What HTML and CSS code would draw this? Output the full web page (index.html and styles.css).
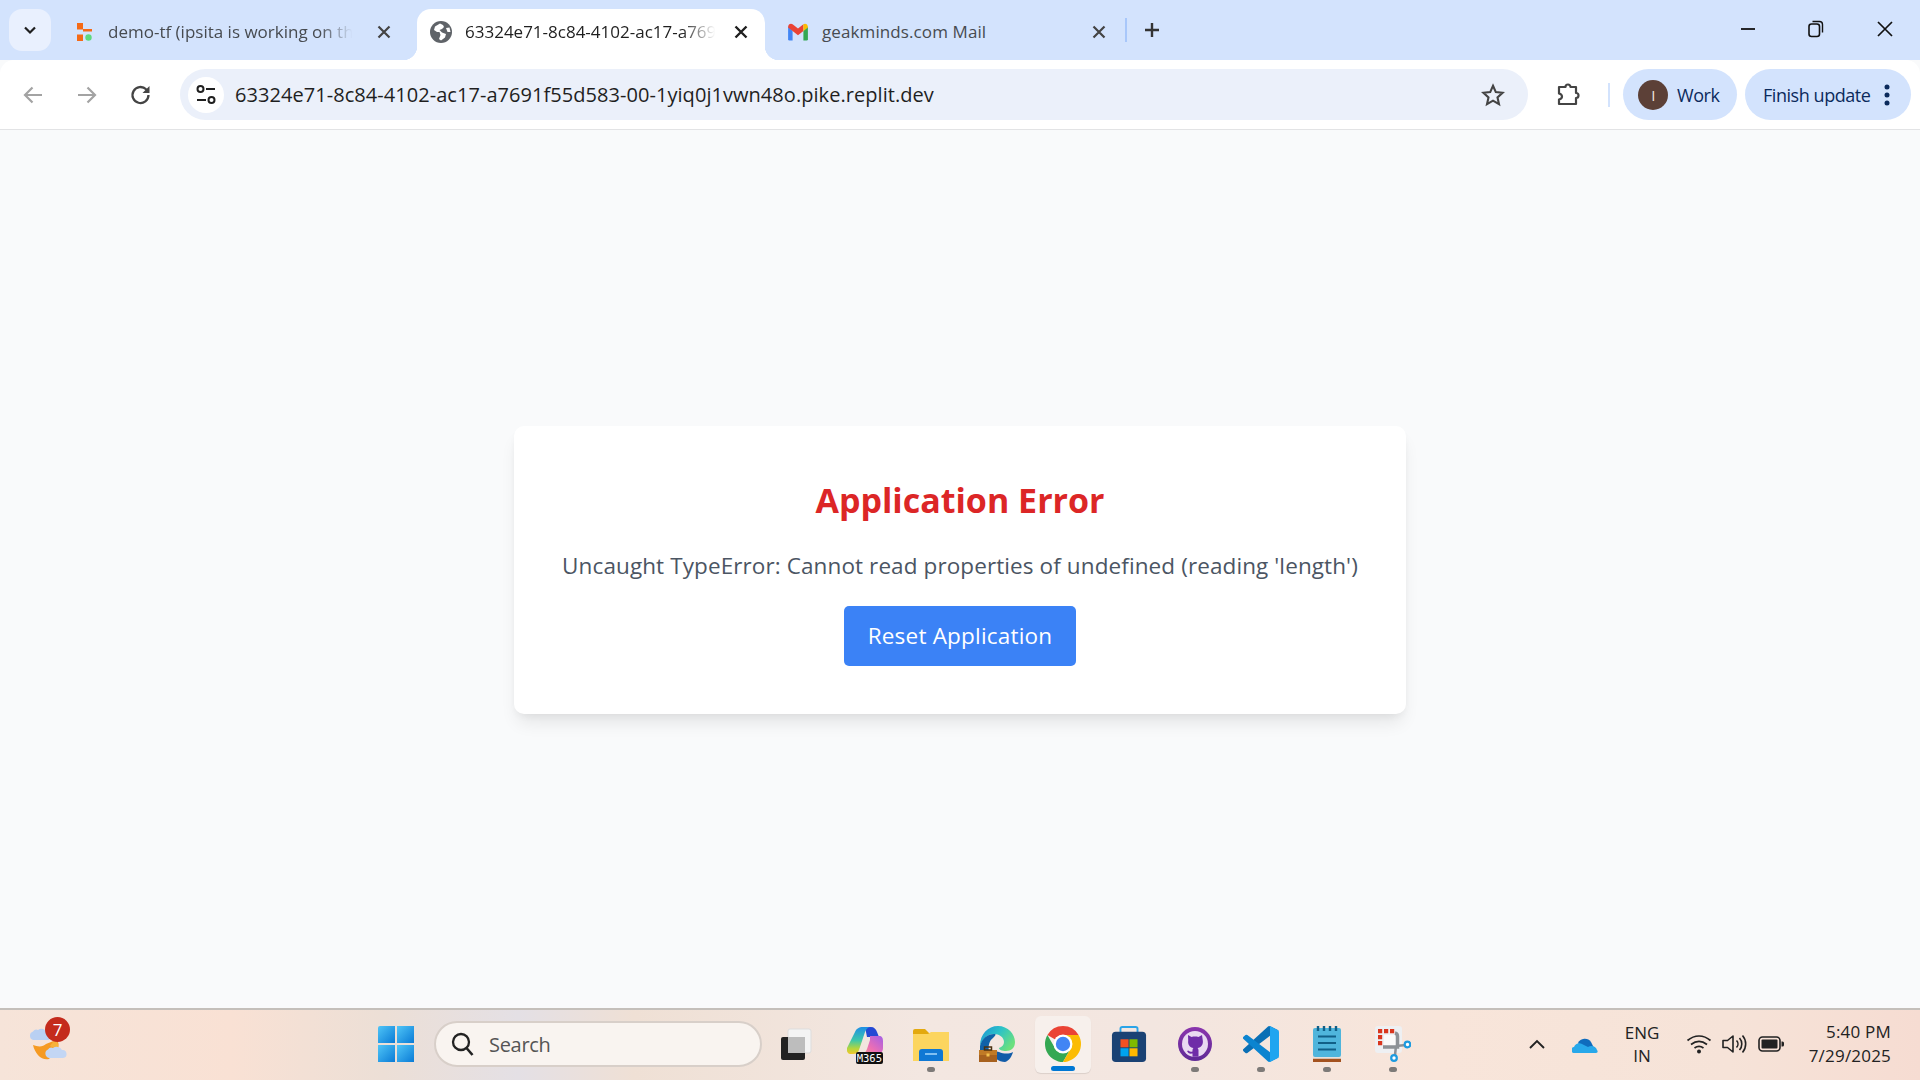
FILE: index.html
```html
<!DOCTYPE html>
<html lang="en">
<head>
<meta charset="utf-8">
<title>Application Error</title>
<link rel="stylesheet" href="styles.css">
</head>
<body>
<div class="window">
  <header class="tabstrip">
    <button class="tabsearch"><svg width="18" height="18" viewBox="0 0 18 18"><path d="M4 6.500l5 5 5-5" fill="none" stroke="#1f1f1f" stroke-width="2.200"/></svg></button>
    <div class="tab tab-one">
      <svg class="favicon" width="16" height="18" viewBox="0 0 16 18"><rect x="0" y="0" width="6" height="6.500" fill="#f56a16"/><rect x="6" y="6" width="9" height="2.500" fill="#f56a16"/><rect x="0" y="11.500" width="6" height="6.500" fill="#f56a16"/><circle cx="11.500" cy="14.500" r="3.200" fill="#5fd97f"/></svg>
      <span class="tabtitle">demo-tf (ipsita is working on th</span>
      <svg class="tabclose" width="20" height="20" viewBox="0 0 20 20"><path d="M4.500 4.500l11 11M15.500 4.500l-11 11" stroke="#444" stroke-width="2.200"/></svg>
    </div>
    <div class="tab tab-active">
      <svg class="favicon" width="22" height="22" viewBox="0 0 22 22"><circle cx="11" cy="11" r="11" fill="#5f6368"/><path d="M10 2.500 5 5.500 4 9l3 2 2.500 0 1 3-1.500 4 2 1.500 4-3 1-3.500-4-1.500-2.500-2.500 2.500-1 2-2-1-2z" fill="#fff"/><path d="M16 7l3.500-.5 1 4.500-3 0z" fill="#fff"/></svg>
      <span class="tabtitle">63324e71-8c84-4102-ac17-a769</span>
      <svg class="tabclose" width="20" height="20" viewBox="0 0 20 20"><path d="M4.500 4.500l11 11M15.500 4.500l-11 11" stroke="#1f1f1f" stroke-width="2.400"/></svg>
    </div>
    <div class="tab tab-three">
      <svg class="favicon" width="22" height="18" viewBox="0 0 24 20"><path d="M1 4v14a1.500 1.500 0 0 0 1.500 1.500H6V9z" fill="#4285f4"/><path d="M23 4v14a1.500 1.500 0 0 1-1.500 1.500H18V9z" fill="#34a853"/><path d="M1 4.500C1 1.500 4 0 6 1.500L12 6l6-4.500V9l-6 4.500L6 9 1 5z" fill="#ea4335"/><path d="M18 1.500C20 0 23 1.500 23 4.500V5l-5 4z" fill="#fbbc04"/></svg>
      <span class="tabtitle tabtitle-plain">geakminds.com Mail</span>
      <svg class="tabclose" width="20" height="20" viewBox="0 0 20 20"><path d="M4.500 4.500l11 11M15.500 4.500l-11 11" stroke="#444" stroke-width="2.200"/></svg>
    </div>
    <span class="tabsep"></span>
    <svg class="newtab" width="20" height="20" viewBox="0 0 20 20"><path d="M10 3v14M3 10h14" stroke="#333" stroke-width="2.400"/></svg>
    <div class="winctl">
      <svg width="16" height="16" viewBox="0 0 16 16"><path d="M1 8h14" stroke="#111" stroke-width="1.800"/></svg>
      <svg width="16" height="18" viewBox="0 0 16 18"><rect x="1" y="4" width="10.500" height="12.500" rx="2.500" fill="none" stroke="#111" stroke-width="1.600"/><path d="M4.500 1.500h7a3 3 0 0 1 3 3v8" fill="none" stroke="#111" stroke-width="1.400"/></svg>
      <svg width="18" height="18" viewBox="0 0 18 18"><path d="M2 2l14 14M16 2L2 16" stroke="#111" stroke-width="1.700"/></svg>
    </div>
  </header>

  <nav class="toolbar">
    <svg class="navbtn" width="24" height="24" viewBox="0 0 24 24"><path d="M21 12H4M11.500 4.500 4 12l7.500 7.500" fill="none" stroke="#a3a3a3" stroke-width="2.200"/></svg>
    <svg class="navbtn" width="24" height="24" viewBox="0 0 24 24"><path d="M3 12h17M12.500 4.500 20 12l-7.500 7.500" fill="none" stroke="#a3a3a3" stroke-width="2.200"/></svg>
    <svg class="navbtn" width="24" height="24" viewBox="0 0 24 24"><path d="M19.500 12a8 8 0 1 1-2.400-5.700L19.500 8.500" fill="none" stroke="#444" stroke-width="2.300"/><path d="M20.500 3v7h-7z" fill="#444"/></svg>
    <div class="omnibox">
      <span class="siteinfo"><svg width="22" height="22" viewBox="0 0 22 22"><circle cx="5.500" cy="5" r="3" fill="none" stroke="#1f1f1f" stroke-width="2"/><path d="M11 5h9M2 16h9" stroke="#1f1f1f" stroke-width="2.200"/><circle cx="16.500" cy="16" r="3" fill="none" stroke="#1f1f1f" stroke-width="2"/></svg></span>
      <span class="url">63324e71-8c84-4102-ac17-a7691f55d583-00-1yiq0j1vwn48o.pike.replit.dev</span>
      <svg class="star" width="24" height="24" viewBox="0 0 24 24"><path d="M12 2.800l2.800 6.300 6.800.7-5.100 4.600 1.500 6.800L12 17.700l-6 3.500 1.500-6.800L2.400 9.800l6.800-.7z" fill="none" stroke="#444" stroke-width="2.100"/></svg>
    </div>
    <svg class="puzzle" width="26" height="26" viewBox="0 1 26 26"><path d="M4 6h6.500a2.500 2.500 0 0 1 5 0H21v6a2.500 2.500 0 0 1 0 5v6H4v-4.500c2-.5 3-1.500 3-3s-1-2.500-3-3z" fill="none" stroke="#444" stroke-width="2.200" stroke-linejoin="round"/></svg>
    <span class="toolsep"></span>
    <div class="pill pill-work"><span class="avatar">I</span><span>Work</span></div>
    <div class="pill pill-update"><span>Finish update</span><svg width="6" height="24" viewBox="0 0 6 24"><circle cx="3" cy="4" r="2.500" fill="#0b2a5c"/><circle cx="3" cy="12" r="2.500" fill="#0b2a5c"/><circle cx="3" cy="20" r="2.500" fill="#0b2a5c"/></svg></div>
  </nav>

  <main class="page">
    <section class="card">
      <h1 class="card-title">Application Error</h1>
      <p class="card-text">Uncaught TypeError: Cannot read properties of undefined (reading 'length')</p>
      <button class="reset">Reset Application</button>
    </section>
  </main>

  <footer class="taskbar">
    <div class="weather">
      <svg width="40" height="44" viewBox="0 0 40 44"><path d="M4 23c5 2 10 2 13-1l10-4c3 2 3 5 2 8L20 37c-7 2-14-5-16-14z" fill="#f59a23"/><path d="M26 17c3 3 4 7 3 11l-8-4z" fill="#f7b23b"/><path d="M4 18a4.500 4.500 0 0 1 0-8.500 4 4 0 0 1 5-1.500 6 6 0 0 1 9 2.500 3.800 3.800 0 0 1 1 7.500z" fill="#b9d0f2"/><path d="M20 36a4.500 4.500 0 0 1-1-8.500 4 4 0 0 1 5-1.500 6 6 0 0 1 9 2 4 4 0 0 1 1 8z" fill="#c3d6f4"/></svg>
      <span class="badge">7</span>
    </div>
    <div class="winlogo"><span></span><span></span><span></span><span></span></div>
    <div class="search">
      <svg width="26" height="26" viewBox="0 0 26 26"><circle cx="11" cy="11" r="8" fill="none" stroke="#222" stroke-width="2.300"/><path d="M16.500 17l6 7" stroke="#222" stroke-width="2.600"/></svg>
      <span>Search</span>
    </div>
    <div class="slot slot-task">
      <svg width="32" height="32" viewBox="0 0 32 32"><rect x="8" y="1" width="23" height="24" rx="2" fill="#f4f4f4" stroke="#ddd"/><rect x="1" y="9" width="24" height="23" rx="2" fill="#222"/><rect x="8" y="9" width="17" height="16" fill="#bdbdbd"/></svg>
    </div>
    <div class="slot slot-m365">
      <svg width="36" height="36" viewBox="0 0 36 36"><defs><linearGradient id="cl" x1="0" y1="0" x2="0" y2="1"><stop offset="0" stop-color="#1f8fe6"/><stop offset=".5" stop-color="#3fc8a8"/><stop offset=".8" stop-color="#b6d53c"/><stop offset="1" stop-color="#f2c72c"/></linearGradient><linearGradient id="cr" x1="1" y1="0" x2="0" y2="1"><stop offset="0" stop-color="#a45fe6"/><stop offset=".6" stop-color="#ec6fb4"/><stop offset="1" stop-color="#f59a8a"/></linearGradient></defs><path d="M18 1h6c3 0 5 2 6 5l2 5H20z" fill="#2448d4"/><path d="M8 6c1-3 4-5 8-5h8c-3 0-5 2-6 5l-6 18c-1 3-3 4-6 4H3c-2 0-4-3-3-6z" fill="url(#cl)"/><path d="M23 10h9c3 0 4 2 4 5v7c0 4-3 6-6 6H14c3 0 5-2 6-5l3-9z" fill="url(#cr)"/></svg>
      <span class="m365">M365</span>
    </div>
    <div class="slot slot-dot">
      <svg width="36" height="33" viewBox="0 0 36 33"><path d="M0 3a2 2 0 0 1 2-2h10l4 4h18a2 2 0 0 1 2 2v3H0z" fill="#e3a90f"/><path d="M0 6h15l3-2h18v29H0z" fill="#fcd55f"/><path d="M6 33v-9a3 3 0 0 1 3-3h18a3 3 0 0 1 3 3v9z" fill="#0f78d4"/><path d="M12 26h12" stroke="#7fc0f2" stroke-width="2"/></svg>
    </div>
    <div class="slot">
      <svg width="36" height="36" viewBox="0 0 36 36"><defs><linearGradient id="eg" x1="0" y1="0" x2="1" y2=".6"><stop offset="0" stop-color="#1a8fd6"/><stop offset=".5" stop-color="#2cc2c8"/><stop offset="1" stop-color="#6be07e"/></linearGradient></defs><path d="M1 20C1 8 9 0 19 0c10 0 17 8 17 16 0 6-4 9-9 9-4 0-7-1-7-3 3-1 5-3 5-6 0-5-5-8-10-8C9 8 4 12 1 20z" fill="url(#eg)"/><path d="M1 20C3 12 9 8 15 8c3 0 1 2-1 4-4 3-5 8-4 14H1z" fill="#0f62a8"/><path d="M11 24c3 8 9 12 15 12 4-1 7-6 8-10-4 2-9 2-14 0z" fill="#125ca8"/><path d="M0 24h18v12H0z" fill="#a7611e"/><path d="M0 24h18v5H0z" fill="#c07a26"/><rect x="5.500" y="21" width="7" height="3" fill="none" stroke="#4a3010" stroke-width="1.500"/><rect x="7.500" y="27.500" width="3" height="3" fill="#f2c14e"/></svg>
    </div>
    <div class="slot slot-active">
      <svg width="36" height="36" viewBox="4 4 40 40"><path d="M24 4a20 20 0 0 1 17.320 10H24a10 10 0 0 0-8.660 5L6.680 14A20 20 0 0 1 24 4z" fill="#ea4335"/><path d="M6.680 14A20 20 0 0 0 24 44l8.660-15a10 10 0 0 1-17.320 0z" fill="#34a853"/><path d="M41.320 14A20 20 0 0 1 24 44l8.660-15a10 10 0 0 0 0-10L24 14z" fill="#fbbc04"/><circle cx="24" cy="24" r="10.500" fill="#fff"/><circle cx="24" cy="24" r="8" fill="#4285f4"/></svg>
    </div>
    <div class="slot">
      <svg width="36" height="36" viewBox="0 0 36 38"><path d="M9 8V3a2 2 0 0 1 2-2h14a2 2 0 0 1 2 2v5" fill="none" stroke="#2aa4e8" stroke-width="2"/><rect y="6" width="36" height="32" rx="4" fill="#1a4274"/><rect x="9" y="14" width="8.500" height="8.500" fill="#f25022"/><rect x="18.500" y="14" width="8.500" height="8.500" fill="#7fba00"/><rect x="9" y="23.500" width="8.500" height="8.500" fill="#00a4ef"/><rect x="18.500" y="23.500" width="8.500" height="8.500" fill="#ffb900"/></svg>
    </div>
    <div class="slot slot-dot">
      <svg width="34" height="34" viewBox="0 0 34 34"><defs><linearGradient id="gh" x1="0" y1="0" x2="0" y2="1"><stop offset="0" stop-color="#8a35ad"/><stop offset="1" stop-color="#5f2a96"/></linearGradient></defs><circle cx="17" cy="17" r="17" fill="url(#gh)"/><circle cx="17" cy="17" r="13" fill="#e9daf1"/><path d="M10 8l3.500 2c2.300-.6 4.700-.6 7 0L24 8l.8 5.500c.6 4-1.500 7-5.300 7.500.8.800 1 1.500 1 2.500v6.300h-6v-3.300c-3 .6-4.500-.5-5.500-2.500l1.500-.5c.7 1 1.500 1.500 4 1v-1c0-1 .2-1.700 1-2.500-3.800-.5-5.900-3.500-5.300-7.500z" fill="#6f2da8"/></svg>
    </div>
    <div class="slot slot-dot">
      <svg width="36" height="36" viewBox="0 0 100 100"><path d="M96.460 10.800 75.860.9a6.230 6.230 0 0 0-7.110 1.210L1.300 63.640a4.170 4.170 0 0 0 .01 6.160l5.510 5a4.170 4.170 0 0 0 5.320.24L93.360 13.370c2.700-2.050 6.640-.13 6.640 3.270v-.24a6.250 6.250 0 0 0-3.540-5.600z" fill="#0a6fb5"/><path d="M96.460 89.200 75.860 99.100a6.230 6.230 0 0 1-7.110-1.210L1.300 36.360a4.170 4.170 0 0 1 .01-6.160l5.510-5a4.170 4.170 0 0 1 5.320-.24l81.220 61.670c2.700 2.050 6.640.13 6.640-3.270v.24a6.250 6.250 0 0 1-3.540 5.600z" fill="#0b84d0"/><path d="M75.860 99.130a6.240 6.240 0 0 1-7.110-1.210c2.300 2.300 6.250.67 6.250-2.590V4.670c0-3.260-3.950-4.890-6.250-2.590a6.240 6.240 0 0 1 7.110-1.210l20.600 9.910A6.250 6.250 0 0 1 100 16.400v67.200a6.250 6.250 0 0 1-3.540 5.630z" fill="#1fa5f0"/></svg>
    </div>
    <div class="slot slot-dot">
      <svg width="28" height="36" viewBox="0 0 28 36"><rect y="32.500" width="28" height="3.500" fill="#a4521f"/><rect y="30" width="28" height="2.500" fill="#e5e1dc"/><rect y="2" width="28" height="29" rx="2" fill="#4fb5dc"/><path d="M5 10.500h18M5 17h18M5 23.500h18" stroke="#115f87" stroke-width="2"/><path d="M5 0v5M11 0v5M17 0v5M23 0v5" stroke="#115f87" stroke-width="2.400"/></svg>
    </div>
    <div class="slot slot-dot">
      <svg width="36" height="36" viewBox="0 0 36 36"><rect width="27" height="27" rx="3" fill="#eef0f3"/><rect x="9" y="9" width="12" height="11" fill="#fafafa"/><path d="M3 3h4.200v4.200H3zM9 3h4.200v4.200H9zM15 3h4.200v4.200H15zM3 9h4.200v4.200H3zM3 15h4.200v4.200H3z" fill="#d9361e"/><path d="M20 7c2 .5 2.500 2 2.500 3.500V21H8" fill="none" stroke="#8c9196" stroke-width="3.500"/><path d="M21 20l10-1M21 20l-1 9" stroke="#8c9196" stroke-width="2.500"/><circle cx="32.500" cy="18.500" r="2.800" fill="#fff" stroke="#1d9be0" stroke-width="2.200"/><circle cx="19" cy="32" r="2.800" fill="#fff" stroke="#1d9be0" stroke-width="2.200"/></svg>
    </div>
    <div class="tray">
      <div class="trayslot"><svg width="18" height="12" viewBox="0 0 18 12"><path d="M2 10l7-7 7 7" fill="none" stroke="#222" stroke-width="1.900"/></svg></div>
      <div class="trayslot trayslot-cloud"><svg width="26" height="18" viewBox="0 0 26 18"><path d="M6 8a7.500 7.500 0 0 1 13-1l4 8-14-2z" fill="#0f6cbd"/><path d="M3 18a3 3 0 0 1-1-6c1-3 5-5 8-3l6 3c3-2 8-1 9 3 1 1 1 3-1 3z" fill="#28a8ea"/></svg></div>
      <div class="lang"><span>ENG</span><span>IN</span></div>
      <div class="trayslot"><svg width="26" height="20" viewBox="0 0 26 20"><path d="M1.500 6.500c7-6 16-6 23 0M5 10.500c5-4 11-4 16 0M8.500 14c3-2.200 6-2.200 9 0" fill="none" stroke="#222" stroke-width="1.700"/><circle cx="13" cy="17.500" r="2" fill="#222"/></svg></div>
      <div class="trayslot"><svg width="26" height="22" viewBox="0 0 26 22"><path d="M1 7.500h4.500L11 3v16l-5.500-4.500H1z" fill="none" stroke="#222" stroke-width="1.600" stroke-linejoin="round"/><path d="M14.500 7.500a5 5 0 0 1 0 7M17.500 5a9 9 0 0 1 0 12M20.500 2.500a13 13 0 0 1 0 17" fill="none" stroke="#222" stroke-width="1.600"/></svg></div>
      <div class="trayslot"><svg width="26" height="16" viewBox="0 0 26 16"><rect x="1" y="1" width="21" height="14" rx="3.500" fill="none" stroke="#222" stroke-width="1.600"/><rect x="3.500" y="3.500" width="16" height="9" rx="1" fill="#222"/><path d="M23.500 5.500h1a1.500 1.500 0 0 1 1.500 1.500v2a1.500 1.500 0 0 1-1.500 1.500h-1z" fill="#222"/></svg></div>
      <div class="clock"><span>5:40 PM</span><span>7/29/2025</span></div>
    </div>
  </footer>
</div>
</body>
</html>
```
FILE: styles.css
```css
* { box-sizing: border-box; }
html, body { margin: 0; height: 100%; }
body { font-family: "Open Sans", "Noto Sans", sans-serif; overflow: hidden; }
.window { display: flex; flex-direction: column; width: 1920px; height: 1080px; background: #f9fafb; }

.tabstrip { display: flex; align-items: flex-start; flex: 0 0 60px; background: #d3e3fd; }
.tabsearch { display: flex; align-items: center; justify-content: center; width: 42px; height: 42px; margin: 9px 6px 0 9px; padding: 0; border: 0; border-radius: 13px; background: #e9f0fe; }
.tab { position: relative; display: flex; align-items: center; height: 51px; margin-top: 9px; padding-bottom: 6px; font-size: 17px; color: #474b50; }
.tab-one { width: 360px; padding-left: 20px; }
.tab-active { width: 348px; padding-left: 13px; background: #fff; border-radius: 14px 14px 0 0; color: #1f1f1f; }
.tab-three { width: 361px; padding-left: 22px; }
.tab-active::before, .tab-active::after { content: ""; position: absolute; bottom: 0; width: 14px; height: 14px; }
.tab-active::before { left: -14px; background: radial-gradient(circle at 0 0, #d3e3fd 14px, #fff 14.5px); }
.tab-active::after { right: -14px; background: radial-gradient(circle at 100% 0, #d3e3fd 14px, #fff 14.5px); }
.favicon { flex: none; margin-right: 14px; }
.tab-one .favicon { margin-right: 15px; }
.tab-active .favicon { margin-right: 13px; }
.tab-three .favicon { margin-right: 13px; }
.tabtitle { flex: 1; min-width: 0; white-space: nowrap; -webkit-mask-image: linear-gradient(90deg, #000 84%, transparent 97%); mask-image: linear-gradient(90deg, #000 84%, transparent 97%); }
.tabtitle-plain { letter-spacing: 0.1px; -webkit-mask-image: none; mask-image: none; }
.tabclose { flex: none; margin: 0 23px 0 14px; }
.tab-active .tabclose { margin-right: 14px; margin-left: 8px; }
.tab-three .tabclose { margin-right: 17px; }
.tabsep { flex: none; width: 2px; height: 24px; margin: 18px 0 0 -1px; background: #a8c7fa; }
.newtab { flex: none; margin: 20px 0 0 15px; }
.winctl { display: flex; align-items: center; margin: 20px 0 0 auto; padding-right: 26px; gap: 52px; }

.toolbar { display: flex; align-items: center; flex: 0 0 70px; padding: 0 10px 0 21px; background: #fff; border-bottom: 1px solid #e2e3e5; border-radius: 14px 14px 0 0; position: relative; }
.navbtn { flex: none; margin-right: 30px; }
.omnibox { display: flex; align-items: center; flex: none; width: 1348px; height: 51px; margin-left: -3px; padding: 0 23px 0 8px; background: #ebf0fa; border-radius: 26px; }
.siteinfo { display: flex; align-items: center; justify-content: center; flex: none; width: 36px; height: 36px; border-radius: 50%; background: #fff; }
.url { flex: 1; margin-left: 11px; font-size: 20px; letter-spacing: 0.05px; color: #1f1f1f; white-space: nowrap; }
.star { flex: none; }
.puzzle { flex: none; margin-left: 27px; }
.toolsep { flex: none; width: 2px; height: 24px; margin: 0 13px 0 27px; background: #d3e3fd; }
.pill { display: flex; align-items: center; flex: none; height: 51px; border-radius: 26px; background: #d3e3fd; color: #0b2a5c; font-size: 18px; letter-spacing: -0.45px; }
.pill-work { width: 114px; padding-left: 15px; gap: 9px; }
.avatar { display: flex; align-items: center; justify-content: center; width: 30px; height: 30px; border-radius: 50%; background: #5c4037; color: #f0e4df; font-size: 15px; }
.pill-update { width: 166px; margin-left: 8px; padding-left: 18px; gap: 14px; }

.page { display: flex; flex: 1; align-items: flex-start; justify-content: center; padding-top: 296px; background: #f9fafb; }
.card { display: flex; flex-direction: column; align-items: center; width: 892px; height: 288px; padding-top: 49px; background: #fff; border-radius: 10px; box-shadow: 0 12px 18px -4px rgba(0,0,0,.09), 0 4px 8px -3px rgba(0,0,0,.06); }
.card-title { margin: 0; font-size: 34px; line-height: 50px; font-weight: 700; color: #dc2626; }
.card-text { margin: 24px 0 0; font-size: 22.5px; line-height: 34px; color: #4b5563; letter-spacing: 0.1px; white-space: nowrap; }
.reset { width: 232px; height: 60px; margin-top: 23px; padding: 0 0 2px; border: 0; border-radius: 5px; background: #3b82f6; color: #fff; font-family: inherit; font-size: 22.5px; letter-spacing: 0.2px; }

.taskbar { display: flex; align-items: center; flex: 0 0 72px; padding-bottom: 2px; border-top: 2px solid #c4bfba; background: linear-gradient(90deg, #f6e4d9 0%, #f9e1d4 12%, #ecdfd6 20%, #e4e0e5 27%, #efe0d5 33%, #f3e7e1 48%, #f3e6e0 60%, #f8e5da 75%, #f6e3d8 90%, #f6dcd2 100%); }
.weather { position: relative; display: flex; flex: none; width: 40px; height: 44px; margin-left: 29px; }
.badge { position: absolute; top: -5px; left: 16px; width: 25px; height: 25px; border-radius: 50%; background: #c42b1c; color: #fff; font-size: 17px; font-weight: 400; line-height: 25px; text-align: center; }
.winlogo { display: grid; grid-template-columns: 1fr 1fr; gap: 1.5px; flex: none; width: 36px; height: 36px; margin-left: 309px; }
.winlogo span { background: linear-gradient(135deg, #4fc5f7, #0a7bd6); }
.winlogo span:first-child { border-radius: 2px 0 0 0; }
.search { display: flex; align-items: center; flex: none; width: 328px; height: 46px; margin-left: 20px; padding-left: 14px; gap: 13px; border: 2px solid #d8cfc9; border-radius: 23px; background: #f9f4f0; color: #555; font-size: 20px; letter-spacing: -0.3px; }
.slot { position: relative; display: flex; align-items: center; justify-content: center; flex: none; width: 66px; height: 56px; }
.slot > svg { position: relative; }
.slot-task { margin-left: 1px; }
.slot-m365 { margin-left: 3px; }
.slot-dot::after { content: ""; position: absolute; left: 29px; bottom: 0; width: 8px; height: 5px; border-radius: 3px; background: #7d7a78; }
.slot-active::before { content: ""; position: absolute; top: 0; right: 5px; bottom: -1px; left: 5px; background: #f7f0ec; border-radius: 6px; box-shadow: 0 1px 1px rgba(0,0,0,.1); }
.slot-active::after { content: ""; position: absolute; left: 21px; bottom: 1px; width: 24px; height: 5px; border-radius: 3px; background: #0078d4; }
.m365 { position: absolute; right: 15px; bottom: 8px; padding: 0 1px; border-radius: 2px; background: #111; color: #fff; font-family: "DejaVu Sans Mono", monospace; font-size: 10.5px; line-height: 12px; }
.tray { display: flex; align-items: center; margin-left: auto; padding-right: 29px; }
.trayslot { display: flex; align-items: center; justify-content: center; flex: none; width: 36px; }
.trayslot-cloud { margin-left: 12px; }
.lang { display: flex; flex-direction: column; align-items: center; flex: none; width: 50px; margin: 0 14px; color: #222; font-size: 17px; line-height: 23px; }
.clock { display: flex; flex-direction: column; align-items: flex-end; flex: none; width: 102px; color: #222; font-size: 17px; line-height: 24px; letter-spacing: 0.2px; white-space: nowrap; }
```
